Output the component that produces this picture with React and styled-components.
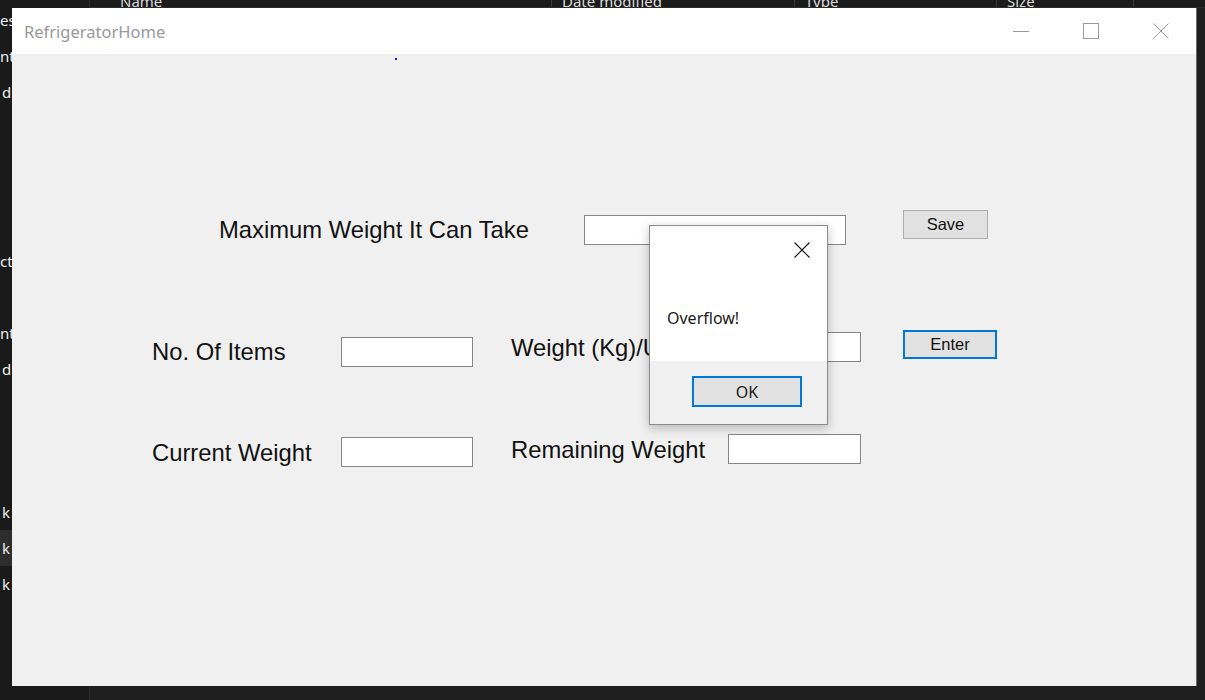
import React from "react";
import styled, { createGlobalStyle } from "styled-components";

const Global = createGlobalStyle`
  html, body { margin: 0; padding: 0; background: #1f1f1f; }
  #root { width: 1205px; height: 700px; }
`;

const Desktop = styled.div`
  position: relative;
  width: 1205px;
  height: 700px;
  overflow: hidden;
  display: flex;
  background: #1f1f1f;
  font-family: "Noto Sans", "Open Sans", sans-serif;
`;

const NavPane = styled.div`
  width: 89px;
  flex: none;
  background: #1a1a1a;
  border-right: 1px solid #2a2a2a;
  display: flex;
  flex-direction: column;
`;

const NavItem = styled.div`
  height: 36px;
  margin-top: ${(p) => p.$mt || 0}px;
  padding-left: ${(p) => p.$pl || 0}px;
  display: flex;
  align-items: center;
  white-space: nowrap;
  color: #f0f0f0;
  font-size: 15px;
  background: ${(p) => (p.$selected ? "#2d2d2d" : "transparent")};
`;

const MainPane = styled.div`
  flex: 1;
  display: flex;
  flex-direction: column;
`;

const Header = styled.div`
  height: 7px;
  display: flex;
  overflow: hidden;
  border-bottom: 1px solid #2b2b2b;
  background: #1b1b1b;
`;

const HeaderCell = styled.div`
  width: ${(p) => p.$w}px;
  flex: none;
  padding-left: ${(p) => p.$pl || 10}px;
  border-right: 1px solid #3a3a3a;
  color: #dcdcdc;
  font-size: 15px;
  line-height: 16px;
  margin-top: -7px;
  white-space: nowrap;
  box-sizing: border-box;
`;

const Window = styled.div`
  position: absolute;
  left: 12px;
  top: 8px;
  width: 1184px;
  height: 678px;
  display: flex;
  flex-direction: column;
  background: #f0f0f0;
  box-shadow: 1px 0 0 rgba(160, 160, 160, 0.6);
`;

const TitleBar = styled.div`
  height: 46px;
  flex: none;
  background: #ffffff;
  display: flex;
  align-items: center;
`;

const Title = styled.div`
  padding-left: 12px;
  color: #999999;
  font-size: 16.5px;
  font-family: "Noto Sans", sans-serif;
`;

const Controls = styled.div`
  margin-left: auto;
  display: flex;
`;

const CtrlButton = styled.div`
  width: 70px;
  height: 46px;
  display: flex;
  align-items: center;
  justify-content: center;
`;

const Content = styled.div`
  position: relative;
  flex: 1;
  display: flex;
  flex-direction: column;
`;

const Dot = styled.div`
  position: absolute;
  left: 383px;
  top: 4px;
  width: 2px;
  height: 2px;
  background: #1010ff;
`;

const Row = styled.div`
  display: flex;
  align-items: flex-start;
  margin-top: ${(p) => p.$mt}px;
  padding-left: ${(p) => p.$pl}px;
`;

const Label = styled.div`
  width: ${(p) => p.$w}px;
  margin-left: ${(p) => p.$ml || 0}px;
  margin-top: ${(p) => p.$mt || 0}px;
  height: 30px;
  line-height: 30px;
  flex: none;
  font-family: "Liberation Sans", Arial, sans-serif;
  font-size: 23.8px;
  color: #111111;
  white-space: nowrap;
`;

const TextBox = styled.div`
  width: ${(p) => p.$w}px;
  margin-top: ${(p) => p.$mt || 0}px;
  height: 30px;
  flex: none;
  box-sizing: border-box;
  background: #ffffff;
  border: 1px solid #868686;
`;

const Button = styled.div`
  width: ${(p) => p.$w}px;
  height: 29px;
  margin-left: ${(p) => p.$ml || 0}px;
  flex: none;
  box-sizing: border-box;
  background: #e1e1e1;
  border: ${(p) => (p.$focused ? "2px solid #0078d7" : "1px solid #adadad")};
  display: flex;
  align-items: center;
  justify-content: center;
  font-family: "Liberation Sans", Arial, sans-serif;
  font-size: 16.5px;
  color: #111111;
`;

const Dialog = styled.div`
  position: absolute;
  left: 637px;
  top: 217px;
  width: 179px;
  height: 200px;
  box-sizing: border-box;
  border: 1px solid #8c8c8c;
  background: #f0f0f0;
  display: flex;
  flex-direction: column;
  box-shadow: 0 3px 10px rgba(0, 0, 0, 0.25);
`;

const DialogBody = styled.div`
  height: 135px;
  background: #ffffff;
  display: flex;
  flex-direction: column;
`;

const DialogClose = styled.div`
  align-self: flex-end;
  margin: 15px 17px 0 0;
  width: 16px;
  height: 16px;
`;

const Message = styled.div`
  margin: 50px 0 0 17px;
  font-family: "Noto Sans", sans-serif;
  font-size: 16px;
  color: #1a1a1a;
`;

const DialogFooter = styled.div`
  flex: 1;
  display: flex;
  justify-content: flex-end;
  align-items: flex-start;
  padding: 15px 25px 0 0;
`;

const OkButton = styled.div`
  width: 110px;
  height: 31px;
  box-sizing: border-box;
  background: #e1e1e1;
  border: 2px solid #0078d7;
  display: flex;
  align-items: center;
  justify-content: center;
  font-family: "Noto Sans", sans-serif;
  font-size: 16px;
  color: #1a1a1a;
`;

const stroke = "#9a9a9a";

export default function App() {
  return (
    <>
      <Global />
      <Desktop>
        <NavPane>
          <NavItem $mt={2}>es:</NavItem>
          <NavItem>nt</NavItem>
          <NavItem $pl={2}>d</NavItem>
          <NavItem $mt={133}>ct:</NavItem>
          <NavItem></NavItem>
          <NavItem>nt</NavItem>
          <NavItem $pl={2}>d</NavItem>
          <NavItem $mt={107} $pl={2}>k</NavItem>
          <NavItem $selected $pl={2}>k</NavItem>
          <NavItem $pl={2}>k</NavItem>
        </NavPane>
        <MainPane>
          <Header>
            <HeaderCell $w={462} $pl={30}>Name</HeaderCell>
            <HeaderCell $w={243}>Date modified</HeaderCell>
            <HeaderCell $w={202}>Type</HeaderCell>
            <HeaderCell $w={137}>Size</HeaderCell>
          </Header>
        </MainPane>

        <Window>
          <TitleBar>
            <Title>RefrigeratorHome</Title>
            <Controls>
              <CtrlButton>
                <svg width="16" height="16" viewBox="0 0 16 16">
                  <line x1="0" y1="8.5" x2="16" y2="8.5" stroke={stroke} strokeWidth="1" />
                </svg>
              </CtrlButton>
              <CtrlButton>
                <svg width="16" height="16" viewBox="0 0 16 16">
                  <rect x="0.5" y="0.5" width="15" height="15" fill="none" stroke={stroke} strokeWidth="1" />
                </svg>
              </CtrlButton>
              <CtrlButton>
                <svg width="16" height="16" viewBox="0 0 16 16">
                  <path d="M0.5 0.5 L15.5 15.5 M15.5 0.5 L0.5 15.5" stroke={stroke} strokeWidth="1" />
                </svg>
              </CtrlButton>
            </Controls>
          </TitleBar>

          <Content>
            <Dot />
            <Row $mt={156} $pl={207}>
              <Label $w={365} $mt={5}>Maximum Weight It Can Take</Label>
              <TextBox $w={262} $mt={5} />
              <Button $w={85} $ml={57}>Save</Button>
            </Row>
            <Row $mt={85} $pl={140}>
              <Label $w={189} $mt={7}>No. Of Items</Label>
              <TextBox $w={132} $mt={7} />
              <Label $w={217} $ml={38} $mt={3}>Weight (Kg)/Unit</Label>
              <TextBox $w={133} $mt={2} />
              <Button $w={94} $ml={42} $focused>Enter</Button>
            </Row>
            <Row $mt={67} $pl={140}>
              <Label $w={189} $mt={4}>Current Weight</Label>
              <TextBox $w={132} $mt={3} />
              <Label $w={217} $ml={38} $mt={1}>Remaining Weight</Label>
              <TextBox $w={133} $mt={0} />
            </Row>
          </Content>

          <Dialog>
            <DialogBody>
              <DialogClose>
                <svg width="16" height="16" viewBox="0 0 16 16">
                  <path d="M0.5 0.5 L15.5 15.5 M15.5 0.5 L0.5 15.5" stroke="#111" strokeWidth="1.1" />
                </svg>
              </DialogClose>
              <Message>Overflow!</Message>
            </DialogBody>
            <DialogFooter>
              <OkButton>OK</OkButton>
            </DialogFooter>
          </Dialog>
        </Window>
      </Desktop>
    </>
  );
}
